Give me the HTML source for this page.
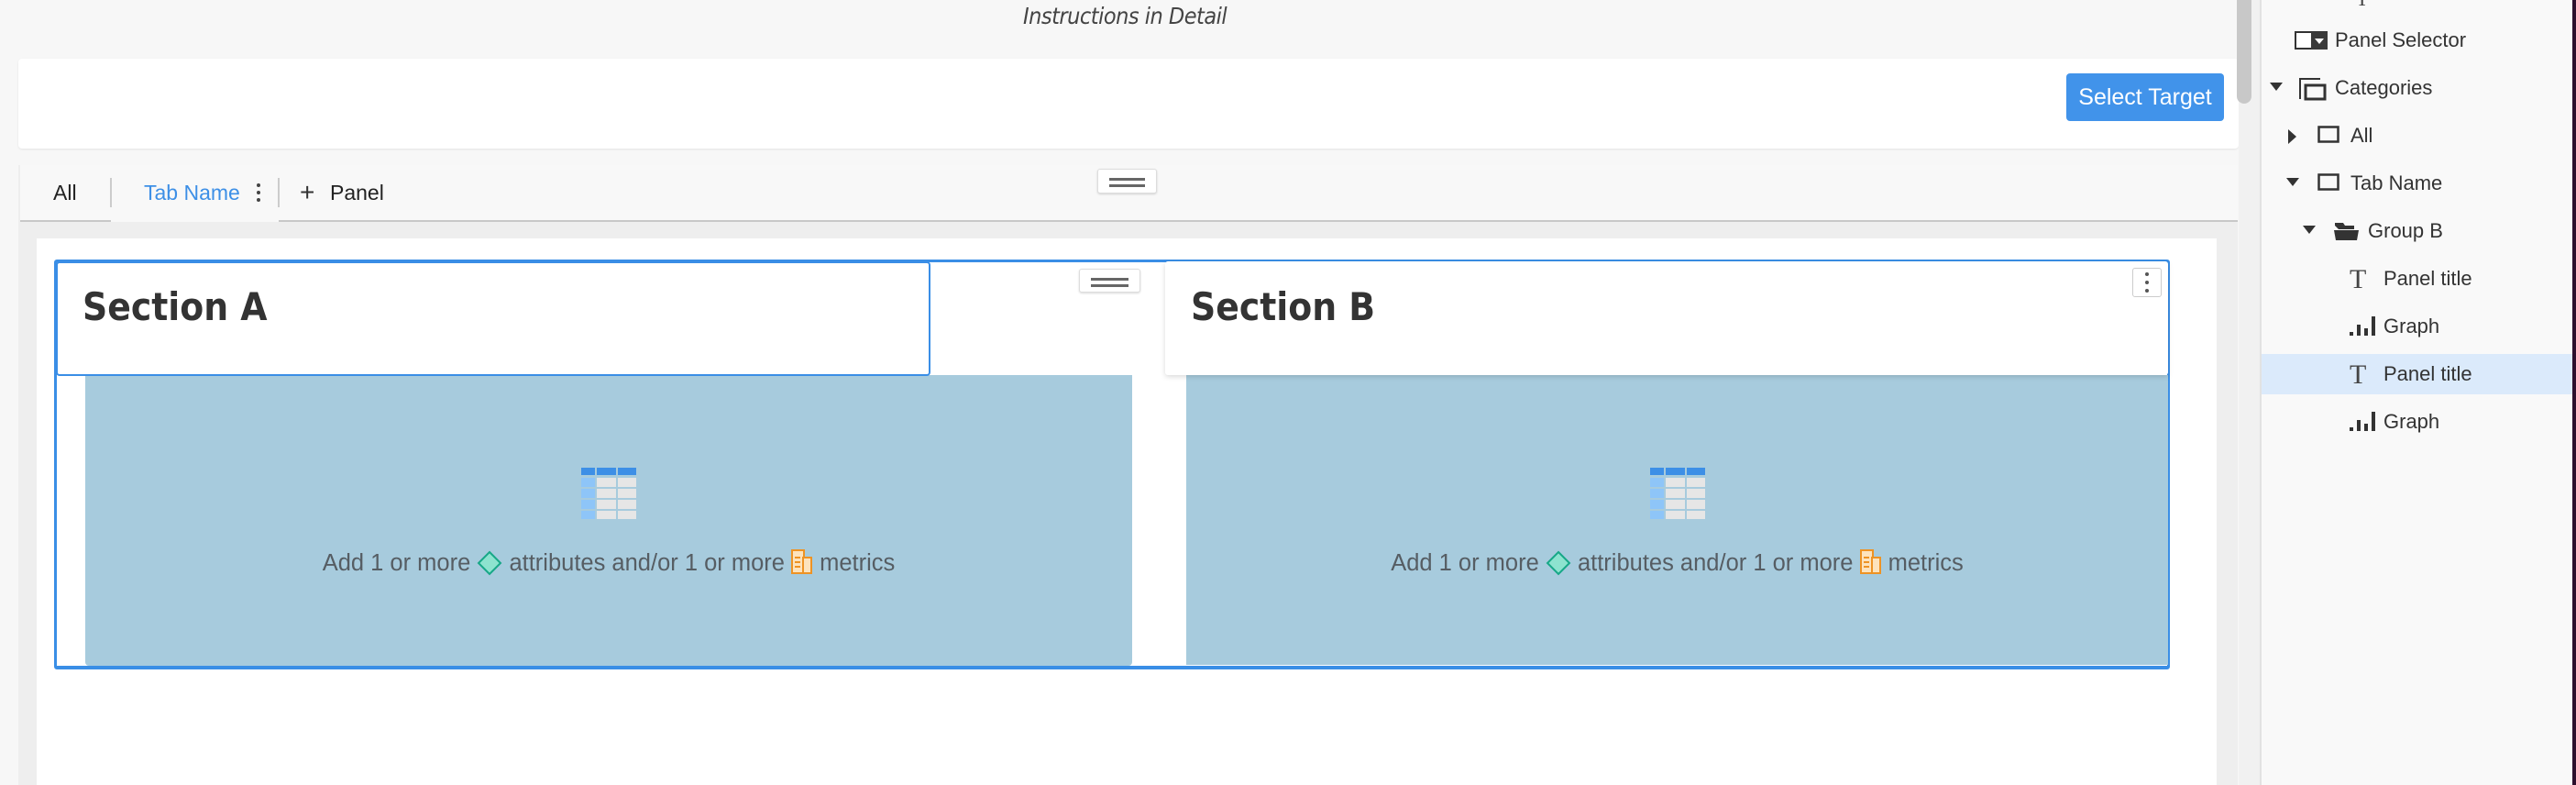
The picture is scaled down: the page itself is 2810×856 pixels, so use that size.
<!DOCTYPE html>
<html><head><meta charset="utf-8"><style>
*{margin:0;padding:0;box-sizing:border-box}
body{width:2810px;height:856px;position:relative;overflow:hidden;background:#f7f7f7;font-family:"Liberation Sans",sans-serif}
.a{position:absolute}
.t{position:absolute;white-space:nowrap;line-height:1}
.handle{position:absolute;background:#fff;border:1px solid #ddd;border-radius:3px;box-shadow:0 1px 2px rgba(0,0,0,.15)}
.handle:before,.handle:after{content:"";position:absolute;left:12px;right:12px;height:3px;background:#666}
.handle:before{top:9px}.handle:after{top:16px}
.viz{position:absolute;background:#a7cbdd}
.msg{position:absolute;top:190px;left:0;right:0;text-align:center;font-size:25.5px;color:#565d63;white-space:nowrap}
.side{font-size:22px;color:#333}
</style></head><body>
<div class="t" style="left:1116px;top:5px;font-size:25px;font-style:italic;color:#444;font-family:'DejaVu Sans Condensed','Liberation Sans',sans-serif;letter-spacing:-0.5px">Instructions in Detail</div>

<div class="a" style="left:20px;top:64px;width:2422px;height:98px;background:#fff;border-radius:4px;box-shadow:0 1px 2px rgba(0,0,0,.08)"></div>
<div class="a" style="left:2254px;top:80px;width:172px;height:52px;background:#4193ea;border-radius:4px;color:#fff;font-size:25px;text-align:center;line-height:52px">Select Target</div>

<div class="a" style="left:2442px;top:0;width:23px;height:856px;background:#f1f1f1"></div>
<div class="a" style="left:2440px;top:0;width:16px;height:113px;background:#c8c8c8;border-radius:0 0 8px 8px"></div>

<div class="a" style="left:20px;top:180px;width:2421px;height:676px;background:#eeeeee"></div>
<div class="a" style="left:22px;top:180px;width:2419px;height:60px;background:#f8f8f8"></div>
<div class="a" style="left:22px;top:240px;width:2419px;height:2px;background:#c8c8c8"></div>
<div class="a" style="left:121px;top:240px;width:183px;height:2px;background:#f8f8f8"></div>
<div class="t" style="left:58px;top:199px;font-size:23px;color:#222">All</div>
<div class="a" style="left:120px;top:194px;width:2px;height:32px;background:#ccc"></div>
<div class="t" style="left:157px;top:199px;font-size:23px;color:#3d8fe6">Tab Name</div>
<div class="a" style="left:280px;top:200px;width:4px;height:4px;border-radius:2px;background:#444;box-shadow:0 8px 0 #444,0 16px 0 #444"></div>
<div class="a" style="left:303px;top:194px;width:2px;height:32px;background:#ccc"></div>
<div class="t" style="left:327px;top:196px;font-size:28px;color:#333">+</div>
<div class="t" style="left:360px;top:199px;font-size:23px;color:#222">Panel</div>
<div class="handle" style="left:1197px;top:184px;width:65px;height:27px"></div>

<div class="a" style="left:40px;top:260px;width:2378px;height:596px;background:#fff"></div>
<div class="a" style="left:59px;top:283px;width:2308px;height:447px;border:3px solid #3a8ee6;border-bottom-width:4px;border-radius:3px"></div>

<div class="viz" style="left:93px;top:409px;width:1142px;height:317px;border-radius:0 0 4px 4px">
 <svg class="a" style="left:541px;top:101px" width="60" height="56">
  <rect x="0" y="0" width="15" height="8" fill="#3d8fe6"/><rect x="17" y="0" width="21" height="8" fill="#3d8fe6"/><rect x="40" y="0" width="20" height="8" fill="#3d8fe6"/>
  <g fill="#8ec5f8"><rect x="0" y="11" width="15" height="10"/><rect x="0" y="23" width="15" height="10"/><rect x="0" y="35" width="15" height="10"/><rect x="0" y="47" width="15" height="9"/></g>
  <g fill="#e6e6e6"><rect x="17" y="11" width="21" height="10"/><rect x="17" y="23" width="21" height="10"/><rect x="17" y="35" width="21" height="10"/><rect x="17" y="47" width="21" height="9"/>
  <rect x="40" y="11" width="20" height="10"/><rect x="40" y="23" width="20" height="10"/><rect x="40" y="35" width="20" height="10"/><rect x="40" y="47" width="20" height="9"/></g>
 </svg>
 <div class="msg">Add 1 or more <svg width="28" height="28" style="vertical-align:-6px"><path d="M14 2 L26 14 L14 26 L2 14 Z" fill="#8de3cf" stroke="#17a887" stroke-width="2"/></svg> attributes and/or 1 or more <svg width="24" height="28" style="vertical-align:-5px"><rect x="1" y="1" width="13" height="25" fill="#fde3bd" stroke="#ee9324" stroke-width="2"/><rect x="13" y="9" width="9" height="17" fill="#fde3bd" stroke="#ee9324" stroke-width="2"/><path d="M4 9h6M4 14h6M4 19h6" stroke="#ee9324" stroke-width="2"/></svg> metrics</div>
</div>
<div class="a" style="left:61px;top:285px;width:954px;height:125px;background:#fff;border:2px solid #3a8ee6;border-radius:4px"></div>
<div class="t" style="left:90px;top:314px;font-size:42px;font-weight:bold;color:#333;font-family:'DejaVu Sans Condensed','Liberation Sans',sans-serif">Section A</div>
<div class="handle" style="left:1177px;top:293px;width:67px;height:26px"></div>

<div class="viz" style="left:1294px;top:409px;width:1071px;height:316px">
 <svg class="a" style="left:506px;top:101px" width="60" height="56">
  <rect x="0" y="0" width="15" height="8" fill="#3d8fe6"/><rect x="17" y="0" width="21" height="8" fill="#3d8fe6"/><rect x="40" y="0" width="20" height="8" fill="#3d8fe6"/>
  <g fill="#8ec5f8"><rect x="0" y="11" width="15" height="10"/><rect x="0" y="23" width="15" height="10"/><rect x="0" y="35" width="15" height="10"/><rect x="0" y="47" width="15" height="9"/></g>
  <g fill="#e6e6e6"><rect x="17" y="11" width="21" height="10"/><rect x="17" y="23" width="21" height="10"/><rect x="17" y="35" width="21" height="10"/><rect x="17" y="47" width="21" height="9"/>
  <rect x="40" y="11" width="20" height="10"/><rect x="40" y="23" width="20" height="10"/><rect x="40" y="35" width="20" height="10"/><rect x="40" y="47" width="20" height="9"/></g>
 </svg>
 <div class="msg">Add 1 or more <svg width="28" height="28" style="vertical-align:-6px"><path d="M14 2 L26 14 L14 26 L2 14 Z" fill="#8de3cf" stroke="#17a887" stroke-width="2"/></svg> attributes and/or 1 or more <svg width="24" height="28" style="vertical-align:-5px"><rect x="1" y="1" width="13" height="25" fill="#fde3bd" stroke="#ee9324" stroke-width="2"/><rect x="13" y="9" width="9" height="17" fill="#fde3bd" stroke="#ee9324" stroke-width="2"/><path d="M4 9h6M4 14h6M4 19h6" stroke="#ee9324" stroke-width="2"/></svg> metrics</div>
</div>
<div class="a" style="left:1271px;top:285px;width:1094px;height:124px;background:#fff;box-shadow:0 2px 6px rgba(0,0,0,.15);border-radius:3px"></div>
<div class="t" style="left:1299px;top:314px;font-size:42px;font-weight:bold;color:#333;font-family:'DejaVu Sans Condensed','Liberation Sans',sans-serif">Section B</div>
<div class="a" style="left:2326px;top:292px;width:32px;height:32px;background:#fff;border:1px solid #ccc;border-radius:3px"></div>
<div class="a" style="left:2340px;top:297px;width:4px;height:4px;border-radius:2px;background:#555;box-shadow:0 9px 0 #555,0 18px 0 #555"></div>

<div class="a" style="left:2465px;top:0;width:341px;height:856px;background:#f9f9f9;border-left:2px solid #e2e2e2"></div>
<div class="a" style="left:2806px;top:0;width:4px;height:856px;background:#2d0f2d"></div>
<div class="a" style="left:2467px;top:386px;width:339px;height:44px;background:#dbeafb"></div>
<div class="t" style="left:2570px;top:-12px;font-size:22px;color:#444;font-family:'Liberation Serif',serif">T</div>

<svg class="a" style="left:2503px;top:34px" width="38" height="21"><rect x="1" y="1" width="34" height="18" fill="#fff" stroke="#333" stroke-width="2"/><rect x="18" y="1" width="18" height="19" fill="#3a3a3a"/><path d="M22 8h10l-5 6z" fill="#fff"/></svg>
<div class="t side" style="left:2547px;top:33px">Panel Selector</div>

<svg class="a" style="left:2474px;top:88px" width="20" height="16"><path d="M2 2h14l-7 9z" fill="#333"/></svg>
<svg class="a" style="left:2507px;top:84px" width="32" height="26"><path d="M2 24V2h22" fill="none" stroke="#333" stroke-width="2"/><rect x="8" y="9" width="21" height="15" fill="none" stroke="#333" stroke-width="3"/></svg>
<div class="t side" style="left:2547px;top:85px">Categories</div>

<svg class="a" style="left:2494px;top:139px" width="14" height="20"><path d="M2 2v16l9-8z" fill="#333"/></svg>
<svg class="a" style="left:2528px;top:137px" width="26" height="21"><rect x="1.5" y="1.5" width="21" height="16" fill="none" stroke="#333" stroke-width="2.5"/></svg>
<div class="t side" style="left:2564px;top:137px">All</div>

<svg class="a" style="left:2492px;top:192px" width="20" height="16"><path d="M2 2h14l-7 9z" fill="#333"/></svg>
<svg class="a" style="left:2528px;top:189px" width="26" height="21"><rect x="1.5" y="1.5" width="21" height="16" fill="none" stroke="#333" stroke-width="2.5"/></svg>
<div class="t side" style="left:2564px;top:189px">Tab Name</div>

<svg class="a" style="left:2510px;top:244px" width="20" height="16"><path d="M2 2h14l-7 9z" fill="#333"/></svg>
<svg class="a" style="left:2545px;top:241px" width="30" height="22"><path d="M2 5v-3h9l2 3h10v4H6z" fill="#333"/><path d="M1 10h27l-2 11H3z" fill="#333"/></svg>
<div class="t side" style="left:2583px;top:241px">Group B</div>

<div class="t" style="left:2563px;top:290px;font-size:30px;color:#444;font-family:'Liberation Serif',serif">T</div>
<div class="t side" style="left:2600px;top:293px">Panel title</div>
<svg class="a" style="left:2563px;top:344px" width="28" height="24"><rect x="0" y="18" width="4" height="4" fill="#333"/><rect x="8" y="10" width="4" height="12" fill="#333"/><rect x="16" y="14" width="4" height="8" fill="#333"/><rect x="24" y="1" width="4" height="21" fill="#333"/></svg>
<div class="t side" style="left:2600px;top:345px">Graph</div>

<div class="t" style="left:2563px;top:394px;font-size:30px;color:#444;font-family:'Liberation Serif',serif">T</div>
<div class="t side" style="left:2600px;top:397px">Panel title</div>
<svg class="a" style="left:2563px;top:448px" width="28" height="24"><rect x="0" y="18" width="4" height="4" fill="#333"/><rect x="8" y="10" width="4" height="12" fill="#333"/><rect x="16" y="14" width="4" height="8" fill="#333"/><rect x="24" y="1" width="4" height="21" fill="#333"/></svg>
<div class="t side" style="left:2600px;top:449px">Graph</div>
</body></html>
